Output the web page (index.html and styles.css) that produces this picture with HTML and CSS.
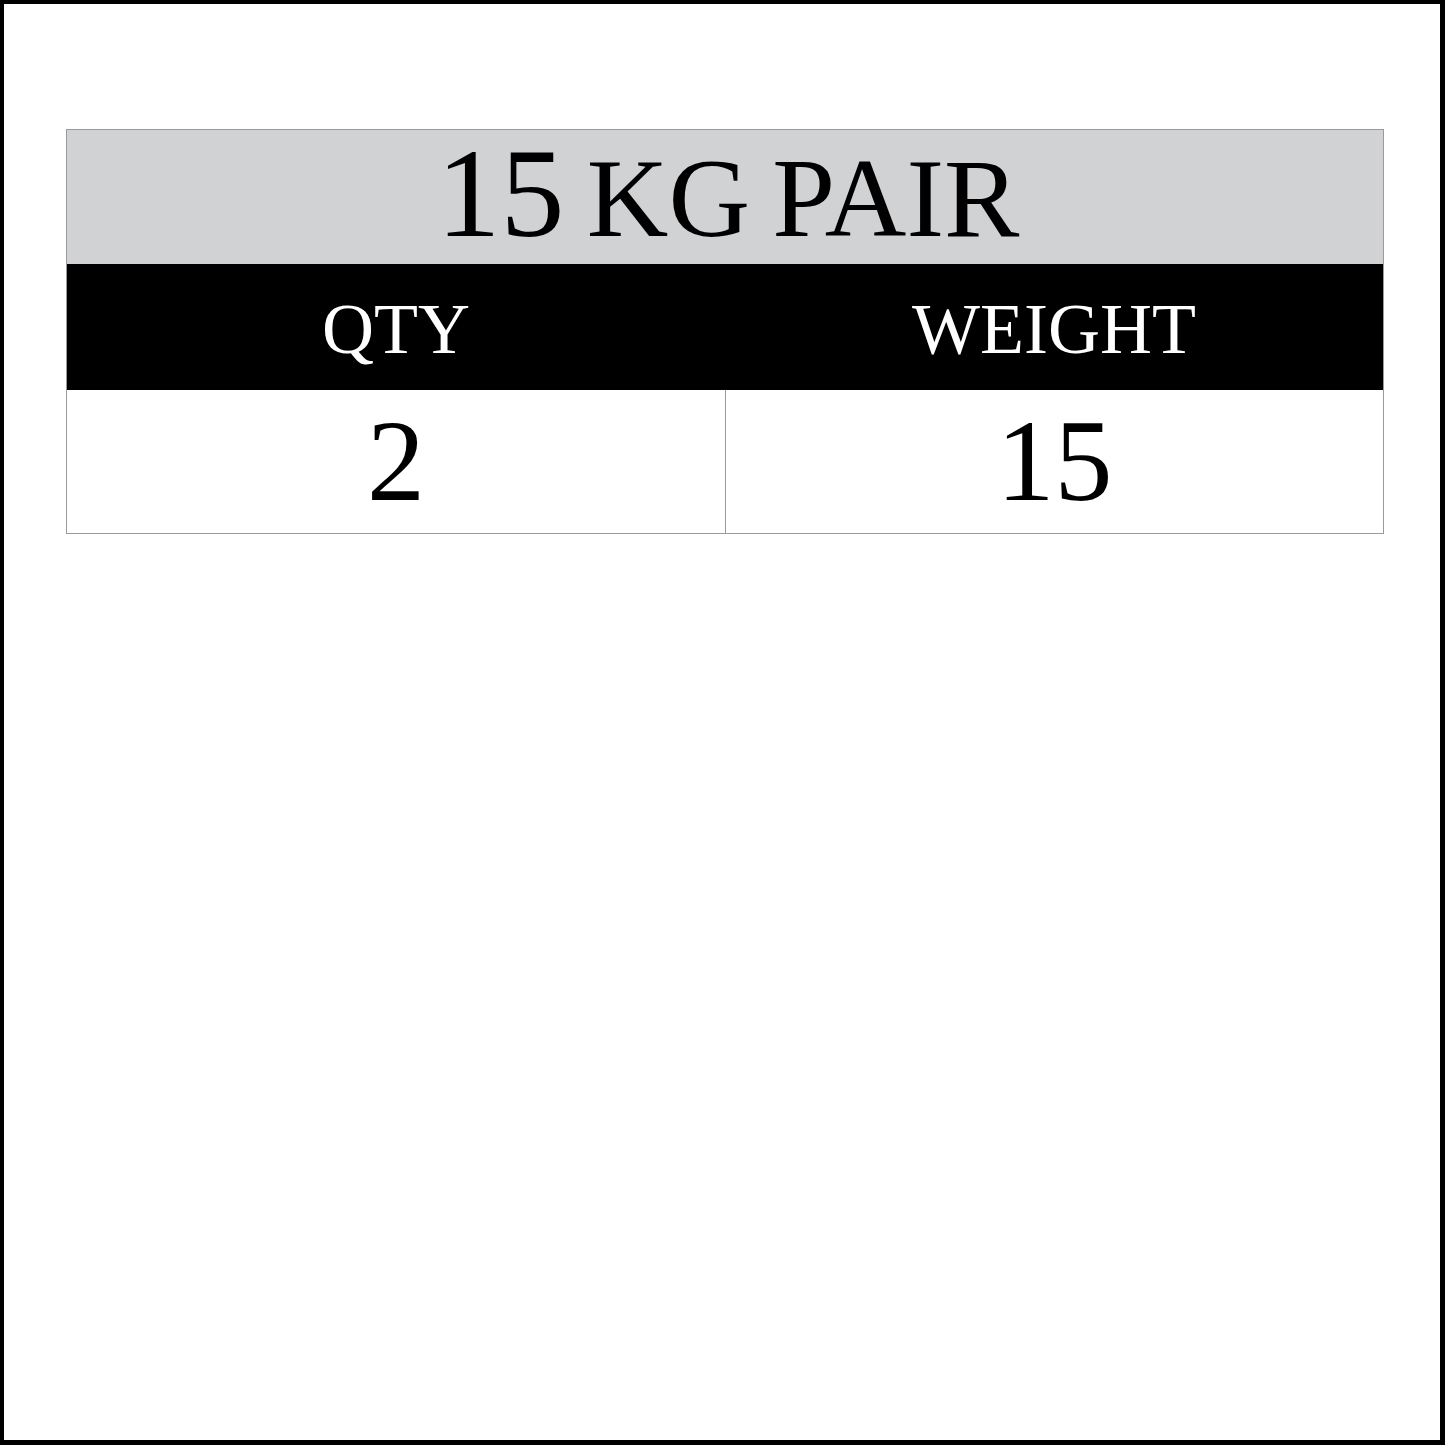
FILE: index.html
```html
<!DOCTYPE html>
<html>
<head>
<meta charset="utf-8">
<link rel="stylesheet" href="styles.css">
</head>
<body>
<div class="frame">
  <div class="chart">
    <div class="title"><span class="big">15</span> KG PAIR</div>
    <div class="heads">
      <div class="cell">QTY</div>
      <div class="cell">WEIGHT</div>
    </div>
    <div class="vals">
      <div class="cell">2</div>
      <div class="cell right">15</div>
    </div>
  </div>
</div>
</body>
</html>
```

FILE: styles.css
```css
html, body {
  margin: 0;
  padding: 0;
  background: #fff;
}
.frame {
  width: 1445px;
  height: 1445px;
  box-sizing: border-box;
  border-style: solid;
  border-color: #000;
  border-width: 4px 5px 5px 4px;
  padding: 125px 0 0 62px;
  font-family: "Liberation Serif", "Times New Roman", serif;
}
.chart {
  width: 1318px;
  box-sizing: border-box;
  border: 1px solid #9a9a9a;
}
.title {
  height: 134px;
  line-height: 134px;
  background: #d1d2d4;
  color: #000;
  text-align: center;
  font-size: 113px;
  padding-left: 6px;
  padding-top: 1px;
  box-sizing: border-box;
  word-spacing: -6px;
}
.big {
  font-size: 128px;
  line-height: 0;
}
.heads {
  display: grid;
  grid-template-columns: 1fr 1fr;
  height: 126px;
  background: #000;
  color: #fff;
  font-size: 72px;
  line-height: 126px;
  text-align: center;
}
.heads .cell {
  padding-top: 2px;
}
.vals {
  display: grid;
  grid-template-columns: 1fr 1fr;
  height: 143px;
  background: #fff;
  color: #000;
  font-size: 116px;
  line-height: 143px;
  text-align: center;
}
.vals .right {
  border-left: 1px solid #9a9a9a;
}
```
